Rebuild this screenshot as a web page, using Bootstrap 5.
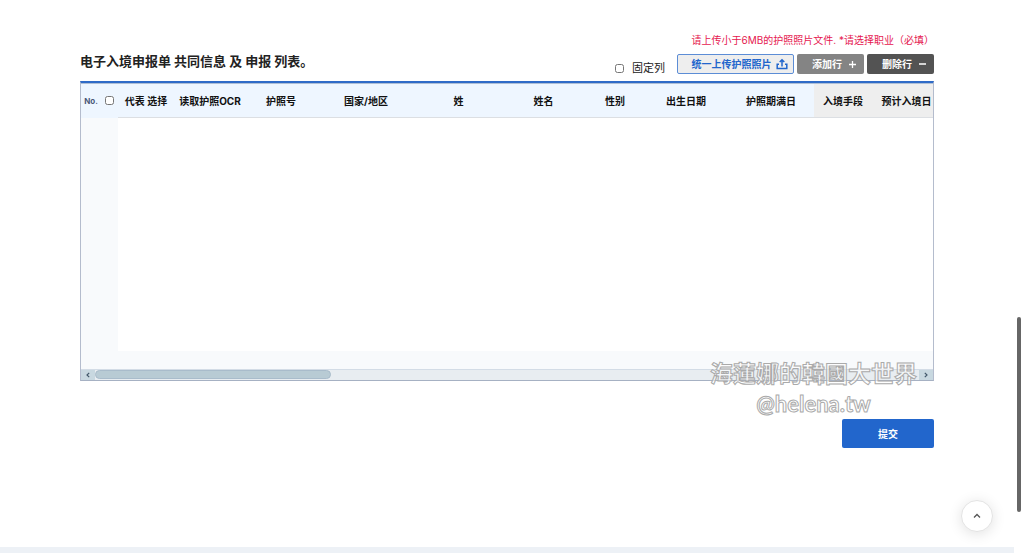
<!DOCTYPE html>
<html lang="zh-CN">
<head>
<meta charset="utf-8">
<meta name="viewport" content="width=device-width, initial-scale=1">
<title>电子入境申报单</title>
<link href="https://cdn.jsdelivr.net/npm/bootstrap@5.3.0/dist/css/bootstrap.min.css" rel="stylesheet">
<style>
body{font-family:"Inter","Noto Sans CJK SC",sans-serif;font-size:10px;line-height:16px;color:#111;background:#fff}
.page{padding-right:10px}
.content{padding:32px 80px 0}
.notice{color:#e5174f}
.title{font-size:13px;line-height:18px;font-weight:700;color:#222}
.check{width:9px;height:9px;margin:0;accent-color:#2266cc}
.heading{margin-bottom:5px}
.tools{margin-top:6px}
.pin-box{padding-top:6px}
.pin{font-size:11px;color:#222}
.tool-row{gap:3px}
.tool{height:20px;font-size:10px;line-height:16px;font-weight:700;border-radius:2px;padding:0 0 0 8px;white-space:nowrap;border:1px solid transparent;display:flex;align-items:center;justify-content:center;gap:6px}
.tool-upload{width:117px;color:#2266cc;background:#eee;border-color:#5c8dd6;gap:4px}
.tool-add{width:67px;color:#fff;background:#848484}
.tool-del{width:67px;color:#fff;background:#535353}
.sheet{border:1px solid #b4bccd;border-top:2px solid #2f6bc7;border-bottom-color:#a6b1c3;background:#f8fafc}
.sheet-view{overflow:hidden;height:286px;border-top:1px solid #aebfd6}
.sheet table{table-layout:fixed;width:860px;border-collapse:separate;border-spacing:0}
.sheet th{height:34px;padding:0;text-align:center;vertical-align:middle;font-weight:700;background:#eef6ff;border-bottom:1px solid #dcdfe3;white-space:nowrap;color:#111}
.sheet th.fix{border-bottom-color:#eef6ff}
.sheet th.num{font-size:8px;color:#4a5878}
.sheet th.off{background:#eee}
.sheet td{height:233px;padding:0;background:#fff}
.sheet td.fix{background:#f8fafc}
.bar{height:11px;background:#e8edf1;border-top:1px solid #d3dce6}
.bar button{width:14px;height:10px;border:0;padding:0;background:#c8d8e0;display:flex;align-items:center;justify-content:center}
.thumb{width:28.6%;height:9px;border:1px solid #a9bccb;border-radius:5px;background:#b8cbd4}
.watermark{right:16px;bottom:-40px;color:rgba(255,255,255,.6);text-align:center;font-family:"Noto Sans CJK TC",sans-serif;font-size:23px;line-height:32px;font-weight:700;-webkit-text-stroke:1px #aaa;pointer-events:none;white-space:nowrap}
.watermark span{display:block;font-size:22px;font-family:"Lato",sans-serif}
.submit{width:92px;height:29px;margin-top:38px;padding:0;font-size:10px;font-weight:700;border:0;border-radius:2px;background:#2266cc;color:#fff}
.totop{right:31px;bottom:21px;width:32px;height:32px;border-radius:50%;border:1px solid #e3e3e3;background:#fff;box-shadow:0 2px 14px rgba(0,0,0,.12);padding:0}
.page-thumb{right:3px;top:317px;width:4px;height:195px;border-radius:2px;background:#666}
.foot{height:6px;background:#edf1f6}
</style>
</head>
<body>
<div class="page d-flex flex-column min-vh-100">
<main class="content flex-grow-1">
  <p class="notice text-end mb-0">请上传小于6MB的护照照片文件. *请选择职业（必填）</p>
  <div class="heading d-flex justify-content-between">
    <h1 class="title mb-0 mt-1">电子入境申报单 共同信息 及 申报 列表。</h1>
    <div class="tools d-flex align-items-start">
      <div class="pin-box d-flex align-items-center gap-2 me-2 pe-1">
        <input class="check" type="checkbox" id="pin"><label class="pin" for="pin">固定列</label>
      </div>
      <div class="tool-row d-flex">
      <button class="tool tool-upload" type="button">统一上传护照照片
        <svg width="12" height="12" viewBox="0 0 12 12" fill="none" stroke="currentColor" stroke-width="1.5"><path d="M3 6.2H1.2v4.3h9.6V6.2H9M6 8.5V1.8M3.7 4 6 1.7 8.3 4"/></svg></button>
      <button class="tool tool-add" type="button">添加行
        <svg width="9" height="9" viewBox="0 0 9 9" stroke="currentColor" stroke-width="1.3"><path d="M1 4.5h7M4.5 1v7"/></svg></button>
      <button class="tool tool-del" type="button">删除行
        <svg width="9" height="9" viewBox="0 0 9 9" stroke="currentColor" stroke-width="1.5"><path d="M1 4h7"/></svg></button>
      </div>
    </div>
  </div>
  <div class="sheet position-relative">
    <div class="sheet-view">
      <table>
        <colgroup><col style="width:20px"><col style="width:17px"><col style="width:56px"><col style="width:72px"><col style="width:70px"><col style="width:100px"><col style="width:85px"><col style="width:85px"><col style="width:58px"><col style="width:84px"><col style="width:86px"><col style="width:58px"><col style="width:69px"></colgroup>
        <thead><tr>
          <th class="num fix">No.</th>
          <th class="fix"><input class="check d-block mx-auto" type="checkbox" aria-label="全选"></th>
          <th>代表 选择</th><th>读取护照OCR</th><th>护照号</th><th>国家/地区</th><th>姓</th><th>姓名</th><th>性别</th><th>出生日期</th><th>护照期满日</th><th class="off">入境手段</th><th class="off">预计入境日</th>
        </tr></thead>
        <tbody><tr><td class="fix" colspan="2"></td><td colspan="11"></td></tr></tbody>
      </table>
    </div>
    <div class="bar d-flex">
      <button type="button" aria-label="向左"><svg width="6" height="6" viewBox="0 0 6 6" fill="none" stroke="#42586a" stroke-width="1.2"><path d="M4.2.8 2 3l2.2 2.2"/></svg></button>
      <div class="flex-grow-1"><div class="thumb"></div></div>
      <button type="button" aria-label="向右"><svg width="6" height="6" viewBox="0 0 6 6" fill="none" stroke="#42586a" stroke-width="1.2"><path d="M1.8.8 4 3 1.8 5.2"/></svg></button>
    </div>
    <div class="watermark position-absolute">海蓮娜的韓國大世界<span>@helena.tw</span></div>
  </div>
  <div class="text-end"><button class="submit" type="submit">提交</button></div>
</main>
<footer class="foot"></footer>
</div>
<button class="totop position-fixed d-flex align-items-center justify-content-center" type="button" aria-label="返回顶部"><svg width="8" height="6" viewBox="0 0 8 6" fill="none" stroke="#555" stroke-width="1.3"><path d="M1 4.5 4 1.5l3 3"/></svg></button>
<div class="page-thumb position-fixed"></div>
<script src="https://cdn.jsdelivr.net/npm/bootstrap@5.3.0/dist/js/bootstrap.bundle.min.js"></script>
</body>
</html>
